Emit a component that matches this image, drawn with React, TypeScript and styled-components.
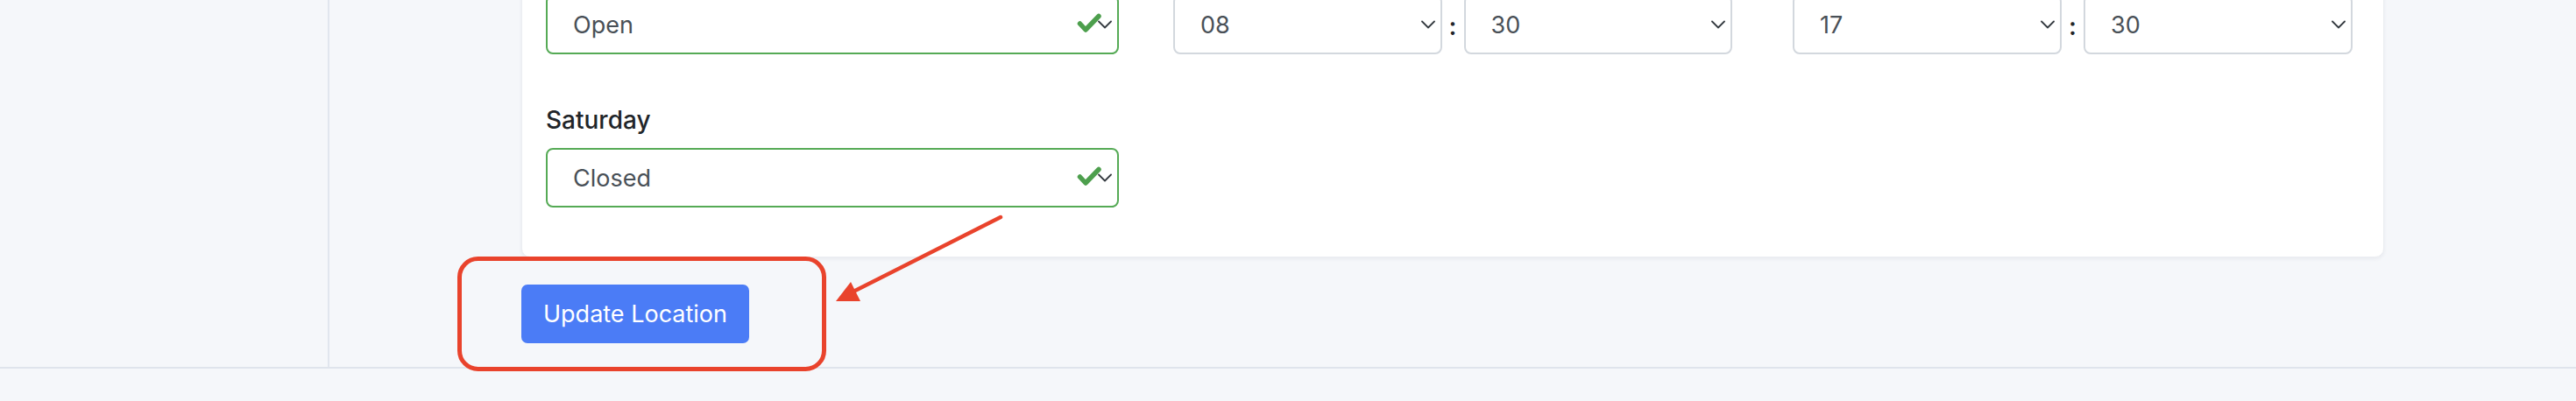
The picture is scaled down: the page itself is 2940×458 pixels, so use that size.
import React from "react";
import styled, { createGlobalStyle } from "styled-components";

const GlobalStyle = createGlobalStyle`
  html, body {
    margin: 0;
    padding: 0;
    background: #f5f7fa;
  }
  body {
    font-family: Inter, "Noto Sans", "Liberation Sans", sans-serif;
    -webkit-font-smoothing: antialiased;
  }
  * { box-sizing: border-box; }
`;

const Page = styled.div`
  position: relative;
  width: 2940px;
  height: 458px;
  overflow: hidden;
  background: #f5f7fa;
`;

const Shell = styled.div`
  display: flex;
  height: 421px;
  border-bottom: 2px solid #dfe4ec;
`;

const Sidebar = styled.aside`
  width: 376px;
  flex: none;
  border-right: 2px solid #e1e6ee;
`;

const Main = styled.main`
  flex: 1;
  min-width: 0;
  padding: 0 219px;
  overflow: hidden;
  display: flex;
  flex-direction: column;
`;

const Card = styled.section`
  margin-top: -34px;
  background: #ffffff;
  border: 1px solid #eceef2;
  border-radius: 10px;
  box-shadow: 0 2px 4px rgba(30, 40, 60, 0.06);
  padding: 27px 36px 56px 27px;
  display: flex;
  flex-direction: column;
  gap: 55px;
`;

const DayRow = styled.div`
  display: grid;
  grid-template-columns: 716px 707px 1fr;
  align-items: end;
`;

const DayField = styled.div`
  display: flex;
  flex-direction: column;
  gap: 12px;
`;

const Label = styled.label`
  font-size: 28px;
  line-height: 40px;
  font-weight: 500;
  color: #212529;
`;

const SelectBox = styled.div<{ $valid?: boolean; $width?: number }>`
  width: ${(p) => (p.$width ? `${p.$width}px` : "100%")};
  height: 68px;
  border: 2px solid ${(p) => (p.$valid ? "#55aa55" : "#d3d8de")};
  border-radius: 8px;
  background: #ffffff;
  padding: 0 6px 0 29px;
  display: flex;
  align-items: center;
  font-size: 27px;
  color: #495057;
`;

const SelectValue = styled.span`
  flex: 1;
  line-height: 1;
`;

const Icons = styled.span`
  display: flex;
  align-items: center;
`;

const CheckIcon = styled.svg`
  width: 28px;
  height: 23px;
  margin-right: -4px;
  margin-top: -4px;
`;

const ChevronIcon = styled.svg`
  width: 16px;
  height: 10px;
`;

const TimeGroup = styled.div<{ $width: number }>`
  width: ${(p) => p.$width}px;
  display: grid;
  grid-template-columns: 1fr 25px 1fr;
  align-items: center;
`;

const Colon = styled.span`
  text-align: center;
  font-size: 28px;
  font-weight: 600;
  color: #212529;
  padding-top: 3px;
`;

const Actions = styled.div`
  margin-top: 31px;
  display: flex;
`;

const PrimaryButton = styled.button`
  height: 67px;
  width: 260px;
  border: none;
  border-radius: 7px;
  background: #4b7cf6;
  color: #ffffff;
  font-family: Inter, "Noto Sans", "Liberation Sans", sans-serif;
  font-size: 27px;
  font-weight: 400;
  padding: 0;
  cursor: pointer;
`;

const Annotation = styled.svg`
  position: absolute;
  left: 0;
  top: 0;
  width: 2940px;
  height: 458px;
  pointer-events: none;
`;

const Chevron = () => (
  <ChevronIcon viewBox="0 0 16 10" fill="none">
    <path d="M1 1.5 L8 8.5 L15 1.5" stroke="#343a40" strokeWidth="1.8" strokeLinecap="round" strokeLinejoin="round" />
  </ChevronIcon>
);

const Check = () => (
  <CheckIcon viewBox="0 0 28 23" fill="none">
    <path d="M3.5 12 L10 19 L25 3.5" stroke="#4d9f4d" strokeWidth="5.5" strokeLinecap="round" strokeLinejoin="round" />
  </CheckIcon>
);

const StatusSelect = ({ value }: { value: string }) => (
  <SelectBox $valid $width={654}>
    <SelectValue>{value}</SelectValue>
    <Icons>
      <Check />
      <Chevron />
    </Icons>
  </SelectBox>
);

const TimeSelect = ({ value }: { value: string }) => (
  <SelectBox>
    <SelectValue>{value}</SelectValue>
    <Icons>
      <Chevron />
    </Icons>
  </SelectBox>
);

const TimePair = ({ h, m, width }: { h: string; m: string; width: number }) => (
  <TimeGroup $width={width}>
    <TimeSelect value={h} />
    <Colon>:</Colon>
    <TimeSelect value={m} />
  </TimeGroup>
);

export default function App() {
  return (
    <Page>
      <GlobalStyle />
      <Shell>
        <Sidebar />
        <Main>
          <Card>
            <DayRow>
              <DayField>
                <StatusSelect value="Open" />
              </DayField>
              <TimePair h="08" m="30" width={638} />
              <TimePair h="17" m="30" width={639} />
            </DayRow>
            <DayRow>
              <DayField>
                <Label>Saturday</Label>
                <StatusSelect value="Closed" />
              </DayField>
            </DayRow>
          </Card>
          <Actions>
            <PrimaryButton type="button">Update Location</PrimaryButton>
          </Actions>
        </Main>
      </Shell>
      <Annotation viewBox="0 0 2940 458">
        <rect x="524.5" y="295.5" width="416" height="126" rx="21" fill="none" stroke="#e9432c" strokeWidth="5" />
        <line x1="1142" y1="248" x2="968" y2="336" stroke="#e9432c" strokeWidth="4.5" strokeLinecap="round" />
        <polygon points="954,344 971,322 982,344" fill="#e9432c" />
      </Annotation>
    </Page>
  );
}
